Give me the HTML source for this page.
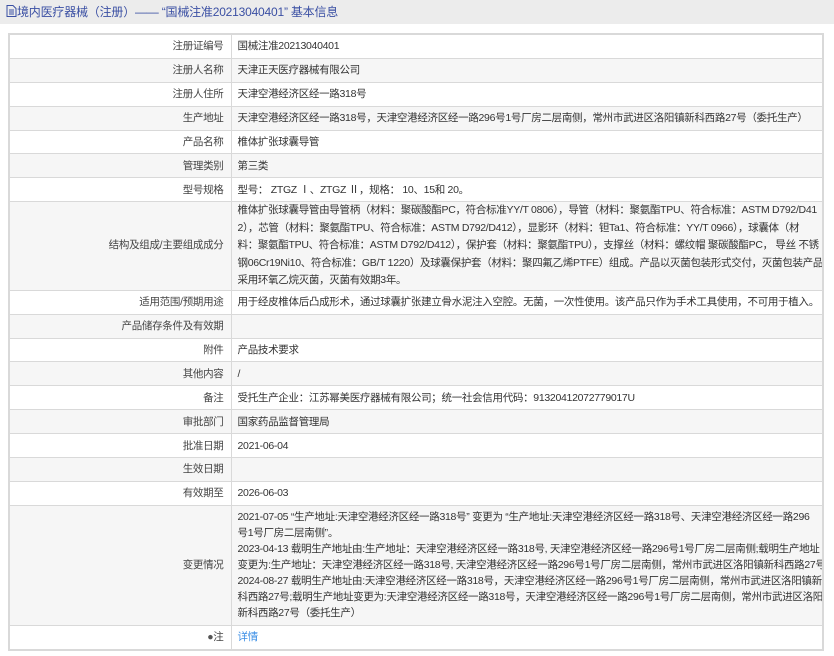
<!DOCTYPE html>
<html><head><meta charset="utf-8"><style>
body{margin:0;background:#fff;font-family:"Liberation Sans","Noto Sans CJK SC",sans-serif;font-size:10.5px;letter-spacing:-0.3px;color:#333;width:834px;height:656px;overflow:hidden;position:relative}
.hd{height:24px;background:#ececec;color:#3a4fa3;font-size:12px;letter-spacing:-0.2px;line-height:24px;padding-left:6px}
table{position:absolute;left:8px;top:33px;width:816px;border-collapse:collapse;border:2px solid #d9d9d9;table-layout:fixed}
td{border:1px solid #d9d9d9;padding:0 6px;line-height:14px;height:22.9px;vertical-align:middle;white-space:nowrap;overflow:hidden}
td.l{text-align:right;color:#444;padding-right:7px}
tr:nth-child(even) td{background:#f6f6f6}
a{color:#3a8ee6;text-decoration:none}
.m td{line-height:17.5px;height:87px}
.c td{line-height:16px;height:119px}
</style></head><body>
<div class="hd"><svg width="11" height="12" viewBox="0 0 11 12" style="vertical-align:-1px"><path d="M1 .5h6l3 3v8H1z" fill="none" stroke="#3a4fa3"/><path d="M3 5h5M3 7h5M3 9h5" stroke="#3a4fa3"/></svg>境内医疗器械（注册）—— “国械注准20213040401” 基本信息</div>
<table>
<colgroup><col style="width:222px"><col></colgroup>
<tr><td class="l">注册证编号</td><td>国械注准20213040401</td></tr>
<tr><td class="l">注册人名称</td><td>天津正天医疗器械有限公司</td></tr>
<tr><td class="l">注册人住所</td><td>天津空港经济区经一路318号</td></tr>
<tr><td class="l">生产地址</td><td>天津空港经济区经一路318号，天津空港经济区经一路296号1号厂房二层南侧，常州市武进区洛阳镇新科西路27号（委托生产）</td></tr>
<tr><td class="l">产品名称</td><td>椎体扩张球囊导管</td></tr>
<tr><td class="l">管理类别</td><td>第三类</td></tr>
<tr><td class="l">型号规格</td><td>型号： ZTGZ Ⅰ、ZTGZ Ⅱ，规格： 10、15和 20。</td></tr>
<tr class="m"><td class="l">结构及组成/主要组成成分</td><td>椎体扩张球囊导管由导管柄（材料：聚碳酸酯PC，符合标准YY/T 0806），导管（材料：聚氨酯TPU、符合标准：ASTM D792/D41<br>2），芯管（材料：聚氨酯TPU、符合标准：ASTM D792/D412），显影环（材料：钽Ta1、符合标准：YY/T 0966），球囊体（材<br>料：聚氨酯TPU、符合标准：ASTM D792/D412），保护套（材料：聚氨酯TPU），支撑丝（材料：螺纹帽 聚碳酸酯PC， 导丝 不锈<br>钢06Cr19Ni10、符合标准：GB/T 1220）及球囊保护套（材料：聚四氟乙烯PTFE）组成。产品以灭菌包装形式交付，灭菌包装产品<br>采用环氧乙烷灭菌，灭菌有效期3年。</td></tr>
<tr><td class="l">适用范围/预期用途</td><td>用于经皮椎体后凸成形术，通过球囊扩张建立骨水泥注入空腔。无菌，一次性使用。该产品只作为手术工具使用，不可用于植入。</td></tr>
<tr><td class="l">产品储存条件及有效期</td><td></td></tr>
<tr><td class="l">附件</td><td>产品技术要求</td></tr>
<tr><td class="l">其他内容</td><td>/</td></tr>
<tr><td class="l">备注</td><td>受托生产企业：江苏幂美医疗器械有限公司；统一社会信用代码：91320412072779017U</td></tr>
<tr><td class="l">审批部门</td><td>国家药品监督管理局</td></tr>
<tr><td class="l">批准日期</td><td>2021-06-04</td></tr>
<tr><td class="l">生效日期</td><td></td></tr>
<tr><td class="l">有效期至</td><td>2026-06-03</td></tr>
<tr class="c"><td class="l">变更情况</td><td>2021-07-05 “生产地址:天津空港经济区经一路318号” 变更为 “生产地址:天津空港经济区经一路318号、天津空港经济区经一路296<br>号1号厂房二层南侧”。<br>2023-04-13 载明生产地址由:生产地址：天津空港经济区经一路318号, 天津空港经济区经一路296号1号厂房二层南侧;载明生产地址<br>变更为:生产地址：天津空港经济区经一路318号, 天津空港经济区经一路296号1号厂房二层南侧，常州市武进区洛阳镇新科西路27号<br>2024-08-27 载明生产地址由:天津空港经济区经一路318号，天津空港经济区经一路296号1号厂房二层南侧，常州市武进区洛阳镇新<br>科西路27号;载明生产地址变更为:天津空港经济区经一路318号，天津空港经济区经一路296号1号厂房二层南侧，常州市武进区洛阳镇<br>新科西路27号（委托生产）</td></tr>
<tr><td class="l"><span style="color:#555">●</span>注</td><td><a>详情</a></td></tr>
</table>
</body></html>
